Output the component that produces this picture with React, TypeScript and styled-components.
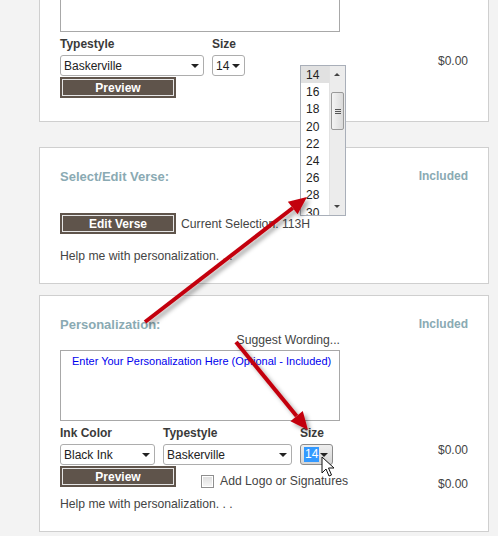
import React from 'react';
import styled, { createGlobalStyle } from 'styled-components';

const GlobalStyle = createGlobalStyle`
  html, body {
    margin: 0;
    padding: 0;
    background: #f3f3f3;
  }
  body {
    font-family: "Liberation Sans", Arial, sans-serif;
    color: #333;
    overflow: hidden;
  }
`;

const sizes = [14, 16, 18, 20, 22, 24, 26, 28, 30];

const Page = styled.div`
  position: relative;
  width: 498px;
  height: 536px;
  overflow: hidden;
  box-sizing: border-box;
  padding-left: 39px;
`;

const Panel = styled.section<{ $top: number; $bottom?: number }>`
  width: 450px;
  box-sizing: border-box;
  margin-top: ${(p) => p.$top}px;
  padding: 20px 20px ${(p) => p.$bottom ?? 20}px 20px;
  background: #fff;
  border: 1px solid #cfcfcf;
`;

const HeadRow = styled.div`
  display: flex;
  justify-content: space-between;
  align-items: center;
  height: 16px;
`;

const Heading = styled.h3`
  margin: 0;
  font-size: 13px;
  font-weight: bold;
  color: #8aaab3;
`;

const Included = styled.span`
  font-size: 12px;
  font-weight: bold;
  color: #8aaab3;
`;

const MessageBox = styled.div`
  width: 280px;
  height: 71px;
  box-sizing: border-box;
  border: 1px solid #a8a8a8;
  padding: 3px 11px;
  font-size: 11px;
  line-height: 14px;
  white-space: nowrap;
  color: #0000ee;
  background: #fff;
`;

const Suggest = styled.div`
  width: 280px;
  text-align: right;
  font-size: 12.2px;
  line-height: 14px;
  margin: 1px 0 3px;
  color: #444;
`;

const FieldRow = styled.div<{ $top: number }>`
  display: flex;
  align-items: flex-start;
  margin-top: ${(p) => p.$top}px;
`;

const Fields = styled.div`
  display: flex;
  gap: 8px;
  flex: 1;
`;

const Field = styled.div`
  display: flex;
  flex-direction: column;
`;

const Label = styled.label`
  font-size: 12px;
  font-weight: bold;
  line-height: 13px;
  color: #3a3a3a;
  margin-bottom: 4px;
`;

const SelectBox = styled.div<{ $width: number; $active?: boolean }>`
  display: flex;
  align-items: center;
  width: ${(p) => p.$width}px;
  height: 21px;
  box-sizing: border-box;
  padding: 0 4px 0 3px;
  border: 1px solid ${(p) => (p.$active ? '#8c8c8c' : '#adadad')};
  border-radius: 3px;
  background: ${(p) => (p.$active ? 'linear-gradient(#eeeeee, #d4d4d4)' : '#fff')};
  font-size: 12px;
  color: #222;
`;

const Caret = styled.span`
  margin-left: auto;
  width: 0;
  height: 0;
  border-left: 4px solid transparent;
  border-right: 4px solid transparent;
  border-top: 4px solid #222;
`;

const Picked = styled.span`
  background: #3399ff;
  color: #fff;
  padding: 0 1px;
  line-height: 15px;
`;

const Price = styled.span<{ $top: number }>`
  width: 40px;
  text-align: right;
  margin-top: ${(p) => p.$top}px;
  font-size: 12px;
  line-height: 14px;
  color: #444;
`;

const ActionRow = styled.div<{ $top?: number }>`
  display: flex;
  align-items: flex-start;
  margin-top: ${(p) => p.$top ?? 1}px;
`;

const DarkButton = styled.button`
  width: 116px;
  height: 21px;
  padding: 0;
  border: none;
  background: #5f544b;
  box-shadow: inset 0 0 0 2px #5f544b, inset 0 0 0 3px #e6e6e6;
  color: #fff;
  font-family: "Liberation Sans", Arial, sans-serif;
  font-size: 12px;
  font-weight: bold;
  cursor: pointer;
`;

const Note = styled.span`
  margin: 4px 0 0 5px;
  font-size: 12.2px;
  color: #444;
`;

const CheckGroup = styled.label`
  display: flex;
  align-items: center;
  gap: 6px;
  flex: 1;
  margin: 8px 0 0 25px;
  font-size: 12.2px;
  color: #444;
`;

const Check = styled.span`
  width: 11px;
  height: 11px;
  border: 1px solid #8f8f8f;
  background: linear-gradient(#dcdcdc, #f7f7f7);
  box-shadow: inset 0 0 0 1px #fff;
`;

const Help = styled.p<{ $top: number }>`
  margin: ${(p) => p.$top}px 0 0;
  font-size: 12.2px;
  line-height: 14px;
  color: #444;
`;

/* open size list with its scrollbar */
const DropList = styled.div`
  position: absolute;
  left: 300px;
  top: 65px;
  width: 46px;
  height: 151px;
  box-sizing: border-box;
  display: flex;
  border: 1px solid #a9afb9;
  background: #fff;
  overflow: hidden;
  z-index: 2;
`;

const Options = styled.ul`
  list-style: none;
  margin: 0;
  padding: 0;
  flex: 1;
`;

const Option = styled.li<{ $current?: boolean }>`
  height: 17.2px;
  line-height: 18px;
  padding-left: 5px;
  font-size: 12px;
  color: #222;
  background: ${(p) => (p.$current ? '#e1e1e1' : 'transparent')};
`;

const Track = styled.div`
  position: relative;
  width: 15px;
  background: #ececec;
  border-left: 1px solid #e2e2e2;
`;

const Thumb = styled.div`
  position: absolute;
  left: 1px;
  right: 1px;
  top: 26px;
  height: 36px;
  border: 1px solid #9a9a9a;
  border-radius: 2px;
  background: linear-gradient(90deg, #f4f4f4, #dadada);
  display: flex;
  flex-direction: column;
  justify-content: center;
  align-items: center;
  gap: 1px;
`;

const Grip = styled.span`
  width: 6px;
  height: 1px;
  background: #555;
`;

const ScrollArrow = styled.span<{ $down?: boolean }>`
  position: absolute;
  left: 4px;
  ${(p) => (p.$down ? 'bottom: 7px;' : 'top: 7px;')}
  width: 0;
  height: 0;
  border-left: 3px solid transparent;
  border-right: 3px solid transparent;
  ${(p) => (p.$down ? 'border-top: 3px solid #444;' : 'border-bottom: 3px solid #444;')}
`;

const Overlay = styled.svg`
  position: absolute;
  left: 0;
  top: 0;
  pointer-events: none;
  z-index: 3;
`;

type Pt = [number, number];

function arrowPoints(from: Pt, to: Pt, head = 18, half = 8) {
  const dx = to[0] - from[0];
  const dy = to[1] - from[1];
  const len = Math.hypot(dx, dy);
  const ux = dx / len;
  const uy = dy / len;
  const bx = to[0] - ux * head;
  const by = to[1] - uy * head;
  const nx = -uy;
  const ny = ux;
  return {
    base: [bx, by] as Pt,
    head: `${to[0]},${to[1]} ${bx + nx * half},${by + ny * half} ${bx - nx * half},${by - ny * half}`,
  };
}

const Arrow = ({ from, to }: { from: Pt; to: Pt }) => {
  const a = arrowPoints(from, to);
  return (
    <g filter="url(#shade)">
      <line
        x1={from[0]}
        y1={from[1]}
        x2={a.base[0]}
        y2={a.base[1]}
        stroke="#c3000c"
        strokeWidth={4}
      />
      <polygon points={a.head} fill="#c3000c" />
    </g>
  );
};

const Select = ({ value, width, active }: { value: string; width: number; active?: boolean }) => (
  <SelectBox $width={width} $active={active}>
    {active ? <Picked>{value}</Picked> : value}
    <Caret />
  </SelectBox>
);

export default function App() {
  return (
    <Page>
      <GlobalStyle />

      <Panel $top={-60} $bottom={23}>
        <MessageBox />
        <FieldRow $top={6}>
          <Fields>
            <Field>
              <Label>Typestyle</Label>
              <Select value="Baskerville" width={144} />
            </Field>
            <Field>
              <Label>Size</Label>
              <Select value="14" width={33} />
            </Field>
          </Fields>
          <Price $top={16}>$0.00</Price>
        </FieldRow>
        <ActionRow>
          <DarkButton>Preview</DarkButton>
        </ActionRow>
      </Panel>

      <Panel $top={25}>
        <HeadRow>
          <Heading>Select/Edit Verse:</Heading>
          <Included>Included</Included>
        </HeadRow>
        <ActionRow $top={29}>
          <DarkButton>Edit Verse</DarkButton>
          <Note>Current Selection: 113H</Note>
        </ActionRow>
        <Help $top={15}>Help me with personalization. . .</Help>
      </Panel>

      <Panel $top={11}>
        <HeadRow>
          <Heading>Personalization:</Heading>
          <Included>Included</Included>
        </HeadRow>
        <Suggest>Suggest Wording...</Suggest>
        <MessageBox>Enter Your Personalization Here (Optional - Included)</MessageBox>
        <FieldRow $top={6}>
          <Fields>
            <Field>
              <Label>Ink Color</Label>
              <Select value="Black Ink" width={95} />
            </Field>
            <Field>
              <Label>Typestyle</Label>
              <Select value="Baskerville" width={129} />
            </Field>
            <Field>
              <Label>Size</Label>
              <Select value="14" width={33} active />
            </Field>
          </Fields>
          <Price $top={16}>$0.00</Price>
        </FieldRow>
        <ActionRow>
          <DarkButton>Preview</DarkButton>
          <CheckGroup>
            <Check />
            Add Logo or Signatures
          </CheckGroup>
          <Price $top={11}>$0.00</Price>
        </ActionRow>
        <Help $top={6}>Help me with personalization. . .</Help>
      </Panel>

      <DropList>
        <Options>
          {sizes.map((s) => (
            <Option key={s} $current={s === 14}>
              {s}
            </Option>
          ))}
        </Options>
        <Track>
          <ScrollArrow />
          <Thumb>
            <Grip />
            <Grip />
            <Grip />
          </Thumb>
          <ScrollArrow $down />
        </Track>
      </DropList>

      <Overlay width={498} height={536}>
        <defs>
          <filter id="shade" x="-20%" y="-20%" width="140%" height="140%">
            <feDropShadow dx="3" dy="3" stdDeviation="2" floodColor="#000" floodOpacity="0.35" />
          </filter>
        </defs>
        <Arrow from={[145, 322]} to={[307, 197]} />
        <Arrow from={[236, 342]} to={[308, 430]} />
        {/* mouse pointer over the size select */}
        <path
          d="M322 457 L322 473 L326 469 L329 476 L331.5 475 L328.5 468 L334 468 Z"
          fill="#fff"
          stroke="#111"
          strokeWidth={1}
          strokeLinejoin="round"
        />
      </Overlay>
    </Page>
  );
}
